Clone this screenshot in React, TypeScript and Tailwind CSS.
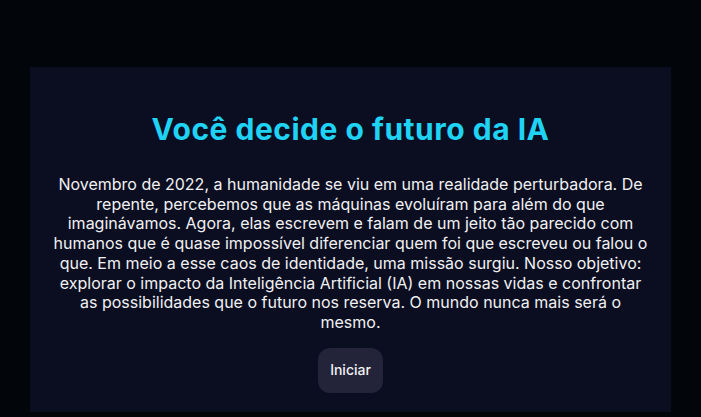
export default function App() {
  return (
    <div className="min-h-screen bg-[#02060b] px-[30px] pt-[67px]" style={{ fontFamily: "Inter, 'Noto Sans', sans-serif" }}>
      <div className="bg-[#0b0e20] px-5 pt-[44px] pb-[19px] flex flex-col items-center text-center">
        {/* Title */}
        <h1 className="text-[30px] leading-9 font-bold text-[#1fd3f5] tracking-[0.5px]">
          Você decide o futuro da IA
        </h1>

        {/* Intro text */}
        <p className="mt-[28px] text-base leading-[19.7px] text-[#f1f1f4]">
          Novembro de 2022, a humanidade se viu em uma realidade perturbadora. De repente, percebemos que as máquinas
          evoluíram para além do que imaginávamos. Agora, elas escrevem e falam de um jeito tão parecido com humanos que é
          quase impossível diferenciar quem foi que escreveu ou falou o que. Em meio a esse caos de identidade, uma missão
          surgiu. Nosso objetivo: explorar o impacto da Inteligência Artificial (IA) em nossas vidas e confrontar as
          possibilidades que o futuro nos reserva. O mundo nunca mais será o mesmo.
        </p>

        <button className="mt-[15px] h-[45px] px-3 rounded-xl bg-[#23243a] text-sm font-medium text-[#f1f1f4]">
          Iniciar
        </button>
      </div>
    </div>
  )
}
